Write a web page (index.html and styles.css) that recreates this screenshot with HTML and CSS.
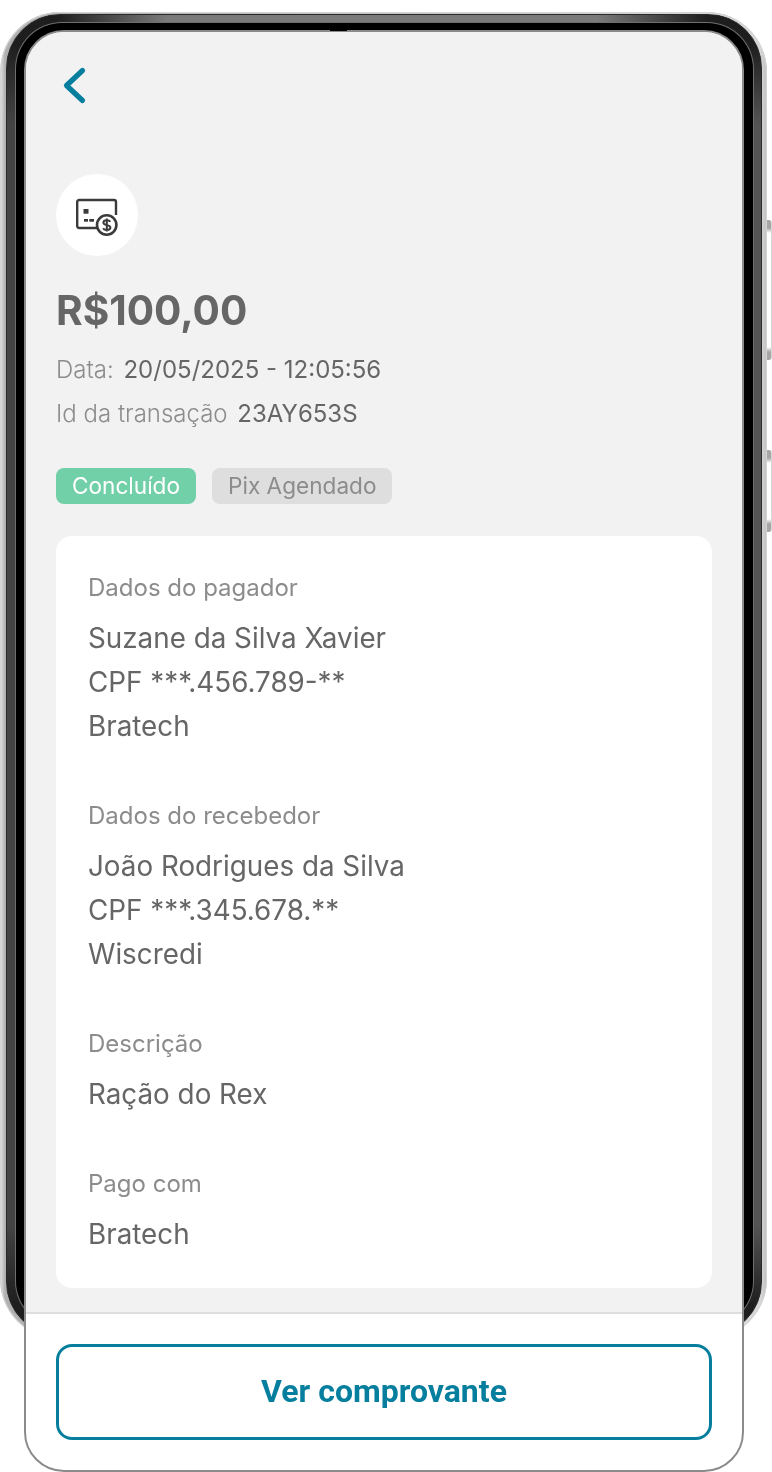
FILE: index.html
```html
<!DOCTYPE html>
<html lang="pt-BR">
<head>
<meta charset="utf-8">
<title>Detalhes da transação</title>
<link rel="stylesheet" href="styles.css">
</head>
<body>
<div class="stage">
  <div class="phone" aria-hidden="true">
    <div class="bezel"><div class="black"></div></div>
    <span class="side side-a"></span>
    <span class="side side-b"></span>
  </div>
  <main class="screen">
    <div class="content">
      <button class="back" aria-label="Voltar">
        <svg width="28" height="40" viewBox="0 0 28 40"><path d="M23.500 4.500 7.500 19.500l16 15" fill="none" stroke="#067f9e" stroke-width="5.200" stroke-linecap="round" stroke-linejoin="round"/></svg>
      </button>
      <div class="avatar">
        <svg width="44" height="42" viewBox="0 0 44 42">
          <path d="M22 34H4.200a2 2 0 0 1-2-2V8a2 2 0 0 1 2-2H39a2 2 0 0 1 2 2v13" fill="none" stroke="#3a3a3a" stroke-width="2.400"/>
          <rect x="8.500" y="15" width="5" height="4.700" fill="#3a3a3a"/>
          <rect x="9" y="25" width="4" height="2.700" fill="#3a3a3a"/>
          <rect x="14.300" y="25" width="4.700" height="2.700" fill="#3a3a3a"/>
          <circle cx="31.700" cy="31" r="9.700" fill="#fff" stroke="#3a3a3a" stroke-width="2.600"/>
          <path d="M35.300 27.800c-.6-1-1.800-1.500-3.500-1.500-2 0-3.400 1-3.400 2.400 0 3.200 7 1.600 7 4.800 0 1.400-1.500 2.400-3.600 2.400-1.800 0-3.100-.6-3.700-1.700M31.800 24.500v13" fill="none" stroke="#3a3a3a" stroke-width="2"/>
        </svg>
      </div>
      <h1 class="amount">R$100,00</h1>
      <p class="meta"><span class="meta-key">Data:</span> <span class="meta-value">20/05/2025 - 12:05:56</span></p>
      <p class="meta"><span class="meta-key">Id da transação</span> <span class="meta-value">23AY653S</span></p>
      <div class="tags">
        <span class="tag tag-done">Concluído</span>
        <span class="tag tag-kind">Pix Agendado</span>
      </div>
      <section class="card">
        <div class="group">
          <h2 class="label">Dados do pagador</h2>
          <p class="value">Suzane da Silva Xavier</p>
          <p class="value">CPF ***.456.789-**</p>
          <p class="value">Bratech</p>
        </div>
        <div class="group">
          <h2 class="label">Dados do recebedor</h2>
          <p class="value">João Rodrigues da Silva</p>
          <p class="value">CPF ***.345.678.**</p>
          <p class="value">Wiscredi</p>
        </div>
        <div class="group">
          <h2 class="label">Descrição</h2>
          <p class="value">Ração do Rex</p>
        </div>
        <div class="group">
          <h2 class="label">Pago com</h2>
          <p class="value">Bratech</p>
        </div>
      </section>
    </div>
    <footer class="footer">
      <button class="cta">Ver comprovante</button>
    </footer>
  </main>
  <span class="notch" aria-hidden="true"></span>
</div>
</body>
</html>
```

FILE: styles.css
```css
* { box-sizing: border-box; }
html, body { margin: 0; padding: 0; background: #fff; }
body { font-family: Inter, "Liberation Sans", sans-serif; color: #666; }
h1, h2, p { margin: 0; font-weight: 400; }
.stage { position: relative; width: 772px; height: 1472px; overflow: hidden; padding: 30px 0 0 24px; }

/* decorative device frame, behind the screen */
.phone {
  position: absolute; left: 0; top: 12px; width: 767px; height: 1327px;
  padding: 2px 5px 3px 6px;
  border-radius: 60px;
  background: linear-gradient(90deg, #e6e6e6 0, #b0b0b0 5px, #d8d8d8 760px, #c0c0c0 100%);
  box-shadow: inset 0 0 0 1px #d4d4d4;
}
.bezel {
  width: 100%; height: 100%;
  padding: 8px 8px 8px 9px;
  border-radius: 54px;
  background:
    linear-gradient(90deg, #1e1e1e 50px, #7a7a7a 160px, #7a7a7a 590px, #1e1e1e 700px) top / 100% 9px no-repeat,
    linear-gradient(180deg, #1e1e1e 30px, #444 110px, #444 calc(100% - 110px), #1e1e1e calc(100% - 30px)) left / 50% 100% no-repeat,
    linear-gradient(180deg, #1e1e1e 30px, #555 110px, #555 calc(100% - 110px), #1e1e1e calc(100% - 30px)) right / 50% 100% no-repeat;
  border: 1px solid #2a2a2a;
}
.black {
  width: 100%; height: 100%;
  border-radius: 46px;
  background: #000;
  box-shadow: 0 0 0 1px #6e6e6e;
}
.side {
  position: absolute; left: 767px; width: 5px;
  background: linear-gradient(180deg, #a6a6a6 0, #a6a6a6 8px, #fff 13px, #fff calc(100% - 13px), #a6a6a6 calc(100% - 8px), #a6a6a6 100%);
  border-right: 1px solid #d8d8d8;
  border-radius: 0 3px 3px 0;
}
.side-a { top: 208px; height: 140px; }
.side-b { top: 438px; height: 82px; }
.notch { position: absolute; left: 330px; top: 29px; width: 17px; height: 2px; background: #000; }

/* screen */
.screen {
  position: relative;
  width: 720px; height: 1442px;
  display: flex; flex-direction: column;
  background: #fff;
  border: 2px solid #8b8b8b;
  border-radius: 40px;
  overflow: hidden;
  will-change: transform;
}
.content {
  height: 1282px;
  padding: 34px 30px 0 30px;
  background: #f2f2f2;
  border-bottom: 2px solid #dedede;
}
.back { display: block; padding: 0; border: 0; background: none; width: 28px; height: 40px; margin-bottom: 68px; margin-left: 3px; }
.avatar {
  width: 82px; height: 82px; border-radius: 50%; background: #fff;
  display: flex; align-items: center; justify-content: center;
  margin-bottom: 29px;
}
.amount { font-size: 40.6px; line-height: 52px; font-weight: 700; color: #666; margin-bottom: 11px; }
.meta { font-size: 24px; line-height: 44px; }
.meta-key { color: #8c8c8c; font-weight: 300; margin-right: 3px; }
.meta-value { color: #666; }
.tags { display: flex; gap: 16px; margin-top: 32px; }
.tag { height: 36px; padding: 0 16px; border-radius: 8px; font-size: 22.6px; line-height: 36px; }
.tag-done { background: #72d0a8; color: #fff; }
.tag-kind { background: #dedede; color: #8c8c8c; }
.card {
  margin-top: 32px; width: 656px; height: 752px;
  padding: 32px 32px 0 32px;
  background: #fff; border-radius: 16px;
}
.group { margin-bottom: 48px; }
.label { font-size: 24px; line-height: 40px; color: #8c8c8c; margin-bottom: 8px; }
.value { font-size: 27.8px; line-height: 44px; color: #666; }

.footer { flex: 1; display: flex; padding: 30px 30px 30px; }
.cta {
  width: 656px; height: 96px; padding: 0 0 2px;
  background: #fff; border: 3px solid #067f9e; border-radius: 16px;
  font-family: Roboto, "Liberation Sans", sans-serif; font-size: 32px; font-weight: 700; color: #067f9e;
}
```
